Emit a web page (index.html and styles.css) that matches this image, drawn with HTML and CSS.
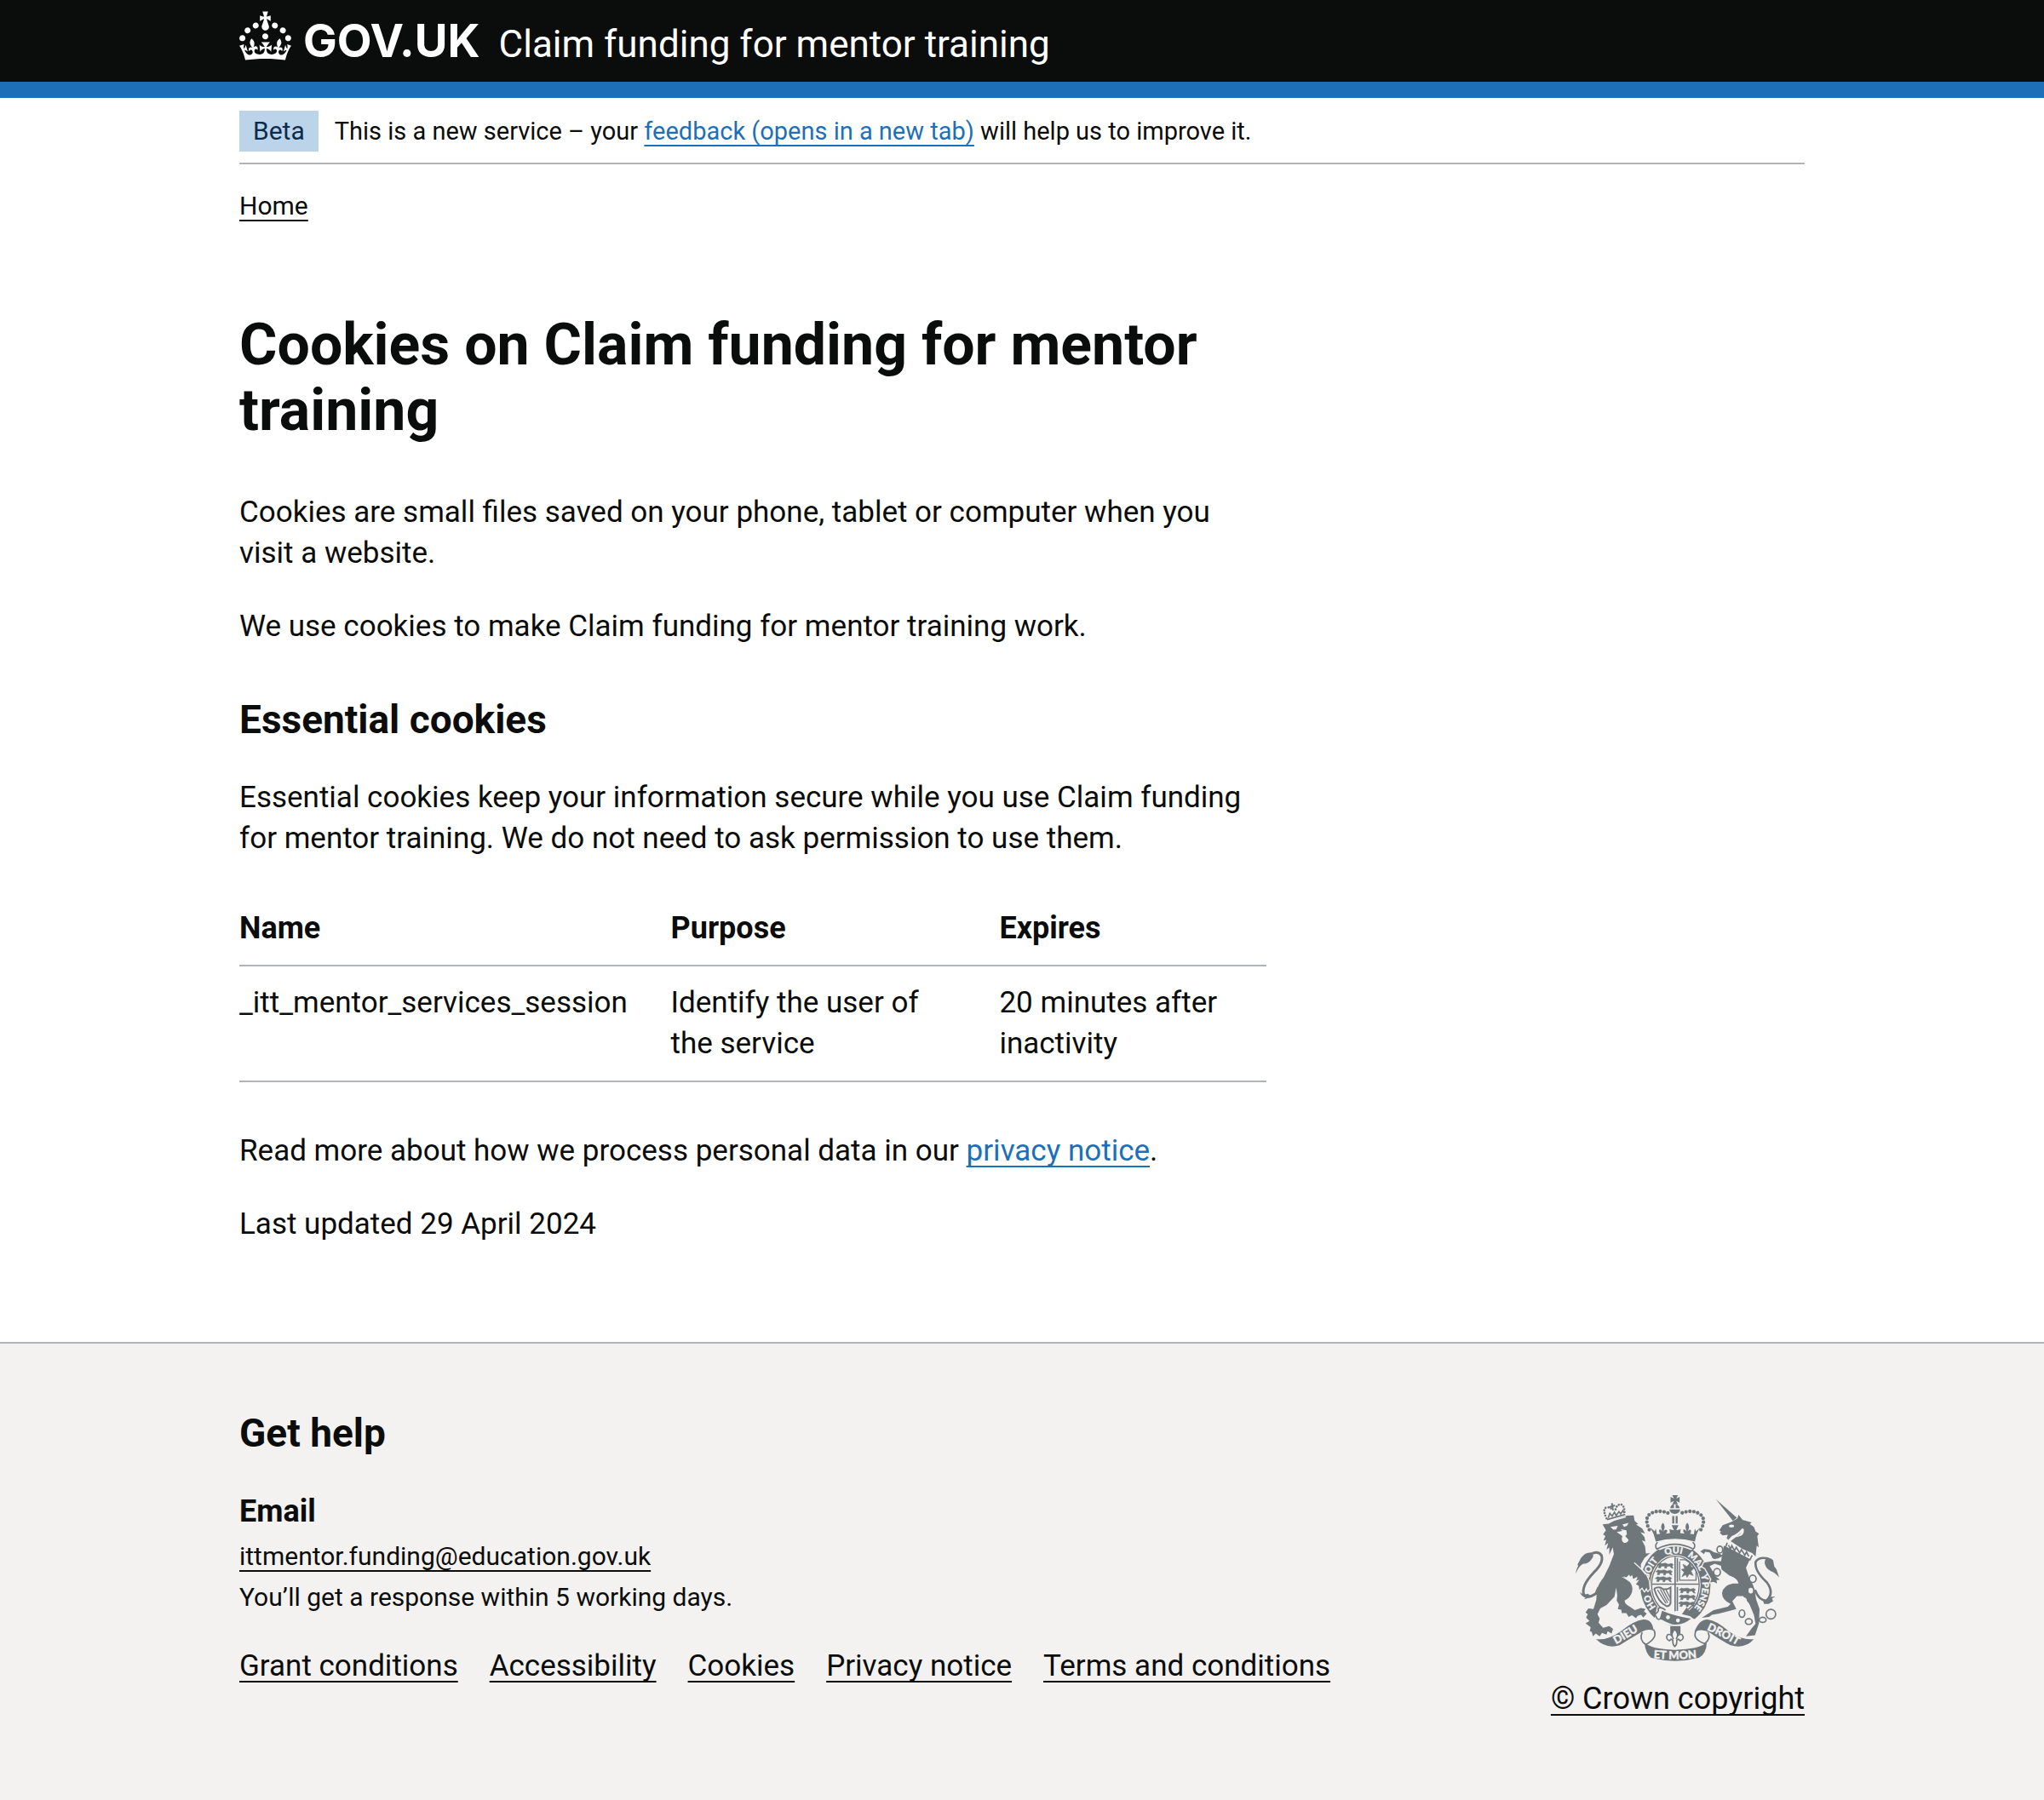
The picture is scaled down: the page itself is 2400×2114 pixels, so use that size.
FILE: index.html
```html
<!DOCTYPE html>
<html lang="en">
<head>
<meta charset="utf-8">
<meta name="viewport" content="width=device-width, initial-scale=1">
<title>Cookies on Claim funding for mentor training</title>
<link rel="stylesheet" href="styles.css">
</head>
<body>
<header class="header">
  <div class="container header-row">
    <a class="logo" href="#">
      <svg class="logo-crown" viewBox="0 0 32 30" aria-hidden="true"><path fill="currentColor" d="M22.6 10.4c-1 .4-2-.1-2.4-1-.4-.9.1-2 1-2.4.9-.4 2 .1 2.4 1s-.1 2-1 2.4m-5.9 6.7c-.9.4-2-.1-2.4-1-.4-.9.1-2 1-2.4.9-.4 2 .1 2.4 1s-.1 2-1 2.4m10.8-3.7c-1 .4-2-.1-2.4-1-.4-.9.1-2 1-2.4.9-.4 2 .1 2.4 1s0 2-1 2.4m3.3 4.8c-1 .4-2-.1-2.4-1-.4-.9.1-2 1-2.4.9-.4 2 .1 2.4 1s-.1 2-1 2.4M17 4.7l2.3 1.2V2.5l-2.3.7-.2-.2.9-3h-3.4l.9 3-.2.2c-.1.1-2.3-.7-2.3-.7v3.4L15 4.7c.1.1.1.2.2.2l-1.3 4c-.1.2-.1.4-.1.6 0 1.1.8 2 1.9 2.2h.7c1-.2 1.9-1.1 1.9-2.1 0-.2 0-.4-.1-.6l-1.3-4c-.1-.2 0-.2.1-.3m-7.6 5.7c.9.4 2-.1 2.4-1 .4-.9-.1-2-1-2.4-.9-.4-2 .1-2.4 1s0 2 1 2.4m-5 3c.9.4 2-.1 2.4-1 .4-.9-.1-2-1-2.4-.9-.4-2 .1-2.4 1s.1 2 1 2.4m-3.2 4.8c.9.4 2-.1 2.4-1 .4-.9-.1-2-1-2.4-.9-.4-2 .1-2.4 1s0 2 1 2.4m14.8 11c4.4 0 8.6.3 12.3.8 1.1-4.5 2.4-7 3.7-8.8l-2.5-.9c.2 1.3.3 1.9 0 2.7-.4-.4-.8-1.1-1.1-2.3l-1.2 4c.7-.5 1.3-.8 2-.9-1.1 2.5-2.6 3.1-3.5 3-1.1-.2-1.7-1.2-1.5-2.1.3-1.2 1.5-1.5 2.1-.1 1.1-2.3-.8-3-2-2.3 1.9-1.9 2.1-3.5.6-5.6-2.1 1.6-2.1 3.2-1.2 5.5-1.2-1.4-3.2-.6-2.5 1.6.9-1.4 2.1-.5 1.9.8-.2 1.1-1.7 2.1-3.5 1.9-2.7-.2-2.9-2.1-2.9-3.6.7-.1 1.9.5 2.9 1.9l.4-4.3c-1.1 1.1-2.1 1.4-3.2 1.4.4-1.2 2.1-3 2.1-3h-5.4s1.7 1.9 2.1 3c-1.1 0-2.1-.2-3.2-1.4l.4 4.3c1-1.4 2.2-2 2.9-1.9-.1 1.5-.2 3.4-2.9 3.6-1.9.2-3.4-.8-3.5-1.9-.2-1.3 1-2.2 1.9-.8.7-2.3-1.2-3-2.5-1.6.9-2.2.9-3.9-1.2-5.5-1.5 2-1.3 3.7.6 5.6-1.2-.7-3.1 0-2 2.3.6-1.4 1.8-1.1 2.1.1.2.9-.3 1.9-1.5 2.1-.9.2-2.4-.5-3.5-3 .6 0 1.2.3 2 .9l-1.2-4c-.3 1.1-.7 1.9-1.1 2.3-.3-.8-.2-1.4 0-2.7l-2.9.9C1.3 23 2.6 25.5 3.7 30c3.7-.5 7.9-.8 12.3-.8"/></svg>
      <span class="logo-text">GOV.UK</span>
    </a>
    <a class="service" href="#">Claim funding for mentor training</a>
  </div>
</header>

<div class="container">
  <div class="phase">
    <strong class="tag">Beta</strong>
    <span>This is a new service – your <a class="link" href="#">feedback (opens in a new tab)</a> will help us to improve it.</span>
  </div>
  <nav class="breadcrumbs" aria-label="Breadcrumb"><a href="#">Home</a></nav>

  <main class="main">
    <h1>Cookies on Claim funding for mentor training</h1>
    <p>Cookies are small files saved on your phone, tablet or computer when you visit a website.</p>
    <p>We use cookies to make Claim funding for mentor training work.</p>
    <h2 class="section-title">Essential cookies</h2>
    <p>Essential cookies keep your information secure while you use Claim funding for mentor training. We do not need to ask permission to use them.</p>
    <table class="cookies">
      <thead>
        <tr><th class="col-name" scope="col">Name</th><th class="col-purpose" scope="col">Purpose</th><th scope="col">Expires</th></tr>
      </thead>
      <tbody>
        <tr><td>_itt_mentor_services_session</td><td>Identify the user of the service</td><td>20 minutes after inactivity</td></tr>
      </tbody>
    </table>
    <p>Read more about how we process personal data in our <a class="link" href="#">privacy notice</a>.</p>
    <p>Last updated 29 April 2024</p>
  </main>
</div>

<footer class="footer">
  <div class="container">
    <h2>Get help</h2>
    <div class="footer-row">
      <div class="footer-main">
        <h3>Email</h3>
        <ul class="contact">
          <li><a href="mailto:ittmentor.funding@education.gov.uk">ittmentor.funding@education.gov.uk</a></li>
          <li>You’ll get a response within 5 working days.</li>
        </ul>
        <ul class="footer-links">
          <li><a href="#">Grant conditions</a></li>
          <li><a href="#">Accessibility</a></li>
          <li><a href="#">Cookies</a></li>
          <li><a href="#">Privacy notice</a></li>
          <li><a href="#">Terms and conditions</a></li>
        </ul>
      </div>
      <div class="copyright">
        <svg class="crest" viewBox="153 78 718 586" aria-hidden="true">
          <defs>
            <path id="garter" d="M505 507A95 112 0 0 1 505 283A95 112 0 0 1 505 507"/>
            <path id="motto-left" d="M286 610Q335 583 385 551"/>
            <path id="motto-right" d="M604 548Q660 572 734 614"/>
            <path id="motto-mid" d="M400 650Q503 663 608 649"/>
            <g id="passant">
              <path d="M0 8l8-6 8 2 14-2 10 4 12-3 6 5-5 4 4 8-7-2-4-6-10 1-3 7-6-1 1-6-12-1-4 7-7-1 3-8z"/>
            </g>
          </defs>

          <!-- garter -->
          <ellipse class="ink" cx="505" cy="395" rx="124" ry="143"/>
          <ellipse class="paper" cx="505" cy="395" rx="89" ry="107"/>
          <ellipse class="line" stroke-width="4" cx="505" cy="395" rx="84" ry="102"/>
          <g class="garter-text">
            <text><textPath href="#garter" startOffset="16%">HO</textPath></text>
            <text><textPath href="#garter" startOffset="34%">SOIT</textPath></text>
            <text><textPath href="#garter" startOffset="49%">QUI</textPath></text>
            <text><textPath href="#garter" startOffset="62%">MAL</textPath></text>
            <text><textPath href="#garter" startOffset="71%">Y</textPath></text>
            <text><textPath href="#garter" startOffset="81%">PENSE</textPath></text>
          </g>

          <!-- quartered shield -->
          <path class="line" stroke-width="5" d="M504 296V494M422 392H588M512 300V384M512 402V488"/>
          <g class="ink beasts">
            <use href="#passant" x="440" y="316"/><use href="#passant" x="436" y="340"/><use href="#passant" x="434" y="364"/>
            <use href="#passant" x="518" y="404"/><use href="#passant" x="518" y="428"/><use href="#passant" x="516" y="452"/>
            <path d="M528 366L536 350L526 340L538 338L532 322L546 330L556 318L562 332L572 334L560 346L568 362L554 356L546 368L542 358Z"/>
          </g>
          <g class="line">
            <path stroke-width="4" d="M520 312V378H578V346Q566 320 540 306H520"/>
            <path stroke-width="6" d="M430 408Q448 398 462 410Q476 412 488 404V448Q490 470 474 470Q444 456 430 408"/>
            <path stroke-width="4" d="M442 412L472 460M452 410L478 458M462 412L482 450M472 412L486 440"/>
          </g>

          <!-- buckle -->
          <path class="paper" d="M440 472L490 490L530 484L566 512L580 520L540 546L460 532L432 512Z"/>
          <path class="ink" d="M458 486Q500 504 560 514Q530 540 494 534Q470 526 450 514ZM528 498L545 474Q554 492 576 500L568 508Z"/>
          <path class="line" stroke-width="5" d="M470 484Q456 470 444 478Q448 488 438 494Q430 500 438 508Q440 520 456 514"/>
          <g class="paper"><circle cx="479" cy="509" r="7"/><circle cx="514" cy="520" r="7"/></g>

          <!-- lion -->
          <g class="ink edged">
            <path d="M248 181L270 179L300 162L335 150L358 149L361 168L374 180L366 182L388 196L398 213L382 209L396 226L399 242L387 237L398 258L401 284L416 282L396 300L383 322L384 340L400 356L411 380L414 408L408 416L403 404L396 417L388 403L378 412L376 398L366 392L378 376L366 380L371 366L356 374L352 360L340 372L314 366L340 380Q358 396 352 420Q346 440 326 450Q326 462 342 470L362 484L384 476L400 480L394 488L404 496L392 510L384 500L372 504L366 512L352 502L340 508L332 494L316 494L314 482L302 480L306 464L298 450L300 432L296 404L290 436L262 466L240 478L230 498L238 514L234 528L250 546L272 540L285 550L280 566L266 558L262 570L246 564L238 576L224 566L214 576L210 560L203 558L206 544L188 530L202 522L190 510L196 498L188 492L198 478L216 480L226 448L228 412Q234 390 252 368Q274 328 288 286L284 262L272 288L272 262L262 270L268 246L256 256L261 236L251 238L258 222L250 216L260 202Z"/>
          </g>
          <g class="ink">
            <path d="M153 356Q156 336 162 328L160 322L172 300Q188 278 206 281Q224 288 208 306Q196 322 180 320Q164 328 153 356Z"/>
            <path d="M168 420L180 430L196 426L210 436L182 446L188 440Q172 434 168 420Z"/>
          </g>
          <g class="line">
            <path stroke-width="9" d="M200 290Q230 270 244 290Q254 316 216 352Q172 398 182 430Q198 444 224 426L234 404"/>
            <path stroke-width="8" stroke-dasharray="0 10" stroke-linecap="round" d="M262 160Q246 124 262 122Q276 118 284 132M294 128Q298 112 312 110Q328 116 325 146"/>
            <path stroke-width="6" d="M281 106L285 132M272 120L292 114"/>
            <path stroke-width="5" d="M264 164L328 146M268 158L274 142L282 152L290 138L296 150L306 136L312 144L320 132L324 142"/>
          </g>
          <g class="paper">
            <path d="M276 190L302 186L296 199L286 200ZM318 182L340 176L334 186L324 190Z"/>
            <path d="M298 208L318 204L312 198L332 202L334 216L328 222L340 236Q336 248 324 246Q312 240 318 222Z"/>
            <path d="M322 364L332 368L342 358L348 370L354 362L354 374L372 370L362 384L340 382Z"/>
          </g>
          <path class="paper-line" stroke-width="4" d="M264 173L330 155M360 316L386 340L400 358"/>

          <!-- unicorn -->
          <g class="ink">
            <path d="M648 92L722 158L708 169Z"/>
            <path d="M708 170L724 160L728 147L742 165L774 174L768 180L782 190L788 206L800 214L794 222L799 262L792 256L788 294L776 282L742 268L700 240Q722 224 744 204L742 194Q724 216 704 222L692 236L686 230L690 218L672 220L662 212L666 206L660 202L672 184Z"/>
            <path class="edged" d="M674 292L654 302L636 300L626 280L610 278L606 286L593 276L606 268L626 270L642 280L660 284Z"/>
            <path class="edged" d="M674 330L644 320L626 328L648 366L662 376L650 378L652 390L640 384L628 386L632 374L610 336L600 330L606 316L640 310L676 312Z"/>
            <path d="M676 256L768 304L754 334L766 370Q784 400 786 420L790 446L802 480L800 530L786 572L754 576L774 548L788 532L782 500L766 462L744 434L722 434L706 452L720 480L660 496L634 500L624 508L598 511L640 484L690 472L700 462Q668 446 670 422Q676 394 710 390L728 390Q724 370 696 362L668 340Q664 324 668 300Z"/>
            <path d="M822 306Q836 292 850 308L854 330L862 340L871 368Q856 350 842 346Q822 336 820 316Z"/>
            <path d="M858 436L842 436L828 452L812 442L818 462L834 462L850 452L846 442Z"/>
          </g>
          <g class="paper">
            <circle cx="778" cy="373" r="10"/>
            <ellipse cx="703" cy="187" rx="9" ry="5"/>
            <ellipse cx="771" cy="415" rx="8" ry="10"/><ellipse cx="748" cy="450" rx="9" ry="11"/>
            <path d="M746 196Q752 224 716 226Q742 214 740 198Z"/>
          </g>
          <g class="line">
            <path stroke-width="8" d="M786 412Q800 450 826 450Q856 424 828 386Q784 346 788 314Q800 294 834 302"/>
            <path stroke-width="5" d="M688 246L682 262L768 306L776 290M692 254L700 268L704 256L714 274L720 262L732 282L738 270L750 290L756 278L764 294"/>
            <g stroke-width="5">
              <ellipse cx="662" cy="270" rx="10" ry="12"/><ellipse cx="644" cy="292" rx="7" ry="9"/>
              <ellipse cx="652" cy="350" rx="12" ry="13"/><ellipse cx="778" cy="373" rx="12" ry="13"/>
              <ellipse cx="740" cy="496" rx="10" ry="13"/><ellipse cx="764" cy="524" rx="12" ry="10"/>
              <ellipse cx="813" cy="518" rx="12" ry="9"/><circle cx="842" cy="498" r="17"/>
            </g>
          </g>

          <!-- royal crown -->
          <path class="paper" d="M430 236H580L584 262L560 272Q503 246 450 272L430 262Z"/>
          <path class="line" stroke-width="5" d="M442 244Q430 256 440 268Q503 234 568 268Q580 256 566 244"/>
          <g class="ink">
            <path d="M494 78H514L508 90L520 84V104L508 98L514 110H494L500 98L488 104V84L500 90Z"/>
            <path d="M487 124Q489 110 500 110V124ZM506 110Q518 112 520 124H506Z"/>
            <path d="M484 128H522Q520 142 503 144Q486 142 484 128Z"/>
            <path d="M494 152H501V178H494ZM506 152H513V178H506Z"/>
            <path d="M417 192L432 206L436 196L440 216L452 214Q444 204 450 198Q456 200 459 206Q450 186 461 176Q472 186 463 206Q470 196 476 202Q478 210 470 214L486 212L484 198L500 202L492 184H516L508 202L524 198L522 212L538 214Q530 206 534 198Q540 198 545 206Q536 186 547 176Q558 186 549 206Q556 196 560 202Q562 210 556 214L570 216L574 196L578 206L592 192Q578 214 574 242Q503 222 436 242Q430 214 417 192Z"/>
          </g>
          <path class="line" stroke-width="13" stroke-linecap="round" stroke-dasharray="0 14" d="M413 200Q394 160 416 144Q446 126 486 144M595 200Q616 160 590 144Q562 126 520 144"/>

          <!-- motto ribbon -->
          <g class="ink">
            <path class="edged" d="M225 586Q262 592 310 560Q360 520 392 517Q424 516 428 556Q404 548 384 562Q336 590 308 608Q260 622 225 586Z"/>
            <path d="M396 598Q420 622 503 624Q588 622 616 598Q614 640 588 652Q503 674 420 652Q400 640 396 598Z"/>
            <path class="edged" d="M782 586Q742 592 696 560Q650 520 618 517Q590 516 572 560Q600 548 624 562Q672 594 700 608Q752 622 782 586Z"/>
            <path d="M487 540H523V570H487Z"/>
          </g>
          <g class="line">
            <path stroke-width="5" d="M428 552Q446 580 400 606Q376 586 388 562M580 554Q560 584 608 602Q632 584 620 562"/>
          </g>
          <path class="fleur" d="M503 552Q486 566 498 586Q492 566 478 570Q468 584 484 592L490 586L496 590V596Q496 608 503 612Q510 608 510 596V590L516 586L522 592Q540 584 528 570Q514 566 508 586Q520 566 503 552Z"/>
          <g class="motto-text">
            <text><textPath href="#motto-left" startOffset="50%">DIEU</textPath></text>
            <text><textPath href="#motto-right" startOffset="50%">DROIT</textPath></text>
            <text><textPath href="#motto-mid" startOffset="50%">ET MON</textPath></text>
          </g>
        </svg>
        <a href="#">© Crown copyright</a>
      </div>
    </div>
  </div>
</footer>
</body>
</html>
```
FILE: styles.css
```css
*,
*::before,
*::after {
  box-sizing: border-box;
}

body {
  margin: 0;
  background: #fff;
  color: #0b0c0c;
  font: 400 35px/48px Roboto, Arial, sans-serif;
}

h1,
h2,
h3,
p,
ul {
  margin: 0;
  padding: 0;
}

ul {
  list-style: none;
}

a {
  color: inherit;
  text-decoration: underline;
  text-decoration-thickness: 2px;
  text-decoration-skip-ink: none;
  text-underline-offset: 6px;
}

h1 {
  margin-bottom: 57px;
  font-size: 68px;
  line-height: 77px;
}

h2 {
  margin-bottom: 39px;
  font-size: 46px;
  line-height: 57px;
}

h3 {
  margin-bottom: 5px;
  font-size: 36px;
}

p {
  margin-bottom: 38px;
}

.link {
  color: #1d70b8;
}

.container {
  max-width: 1838px;
  margin: 0 auto;
}

/* Header */
.header {
  border-bottom: 19px solid #1d70b8;
  background: #0b0c0c;
  color: #fff;
}

.header-row {
  display: flex;
  align-items: flex-start;
  gap: 22px;
  padding: 13px 0 5px;
}

.header a {
  text-decoration: none;
}

.logo {
  display: flex;
  align-items: flex-start;
  gap: 14px;
}

.logo-crown {
  width: 61px;
  height: 58px;
}

.logo-text {
  font: 700 53px/70px Inter, Arial, sans-serif;
}

.service {
  font-size: 44px;
  line-height: 78px;
}

/* Phase banner and breadcrumbs */
.phase {
  display: flex;
  align-items: center;
  gap: 19px;
  padding: 15px 0 13px;
  border-bottom: 2px solid #b1b4b6;
  font-size: 29px;
}

.tag {
  padding: 0 16px;
  background: #bbd4ea;
  color: #0c2d4a;
  font-size: 30px;
  font-weight: 400;
}

.breadcrumbs {
  margin: 30px 0 106px;
  font-size: 30px;
  line-height: 38px;
}

/* Main content */
.main {
  max-width: 1206px;
  padding-bottom: 76px;
}

.section-title {
  margin-top: 57px;
}

.cookies {
  width: 100%;
  margin-bottom: 57px;
  border-collapse: separate;
  border-spacing: 0;
  table-layout: fixed;
}

.cookies th,
.cookies td {
  padding: 19px 38px 19px 0;
  border-bottom: 2px solid #b1b4b6;
  text-align: left;
  vertical-align: top;
}

.cookies th {
  font-size: 36px;
}

.cookies th:last-child,
.cookies td:last-child {
  padding-right: 0;
}

.col-name {
  width: 42%;
}

.col-purpose {
  width: 32%;
}

/* Footer */
.footer {
  padding: 77px 0 95px;
  border-top: 2px solid #b1b4b6;
  background: #f3f2f1;
}

.footer-row {
  display: flex;
  align-items: flex-end;
  justify-content: space-between;
}

.footer-main {
  padding-bottom: 38px;
}

.contact {
  margin-bottom: 33px;
  font-size: 30px;
}

.footer-links {
  display: flex;
  flex-wrap: wrap;
  gap: 0 37px;
}

.copyright {
  display: flex;
  flex-direction: column;
  align-items: center;
  gap: 20px;
  font-size: 36px;
}

/* Royal coat of arms */
.crest {
  width: 239px;
  height: 195px;
}

.ink {
  fill: #6f777b;
}

.edged {
  stroke: #f3f2f1;
  stroke-width: 8px;
  stroke-linejoin: round;
  paint-order: stroke;
}

.beasts {
  stroke: #6f777b;
  stroke-width: 2px;
}

.paper {
  fill: #f3f2f1;
}

.line {
  fill: none;
  stroke: #6f777b;
}

.paper-line {
  fill: none;
  stroke: #f3f2f1;
}

.fleur {
  fill: #f3f2f1;
  stroke: #6f777b;
  stroke-width: 5px;
}

.garter-text,
.motto-text {
  fill: #f3f2f1;
  stroke: #f3f2f1;
  stroke-width: 1px;
  font-family: Lato, Arial, sans-serif;
  font-weight: 900;
  text-anchor: middle;
}

.garter-text {
  font-size: 32px;
}

.motto-text {
  font-size: 39px;
}
```
